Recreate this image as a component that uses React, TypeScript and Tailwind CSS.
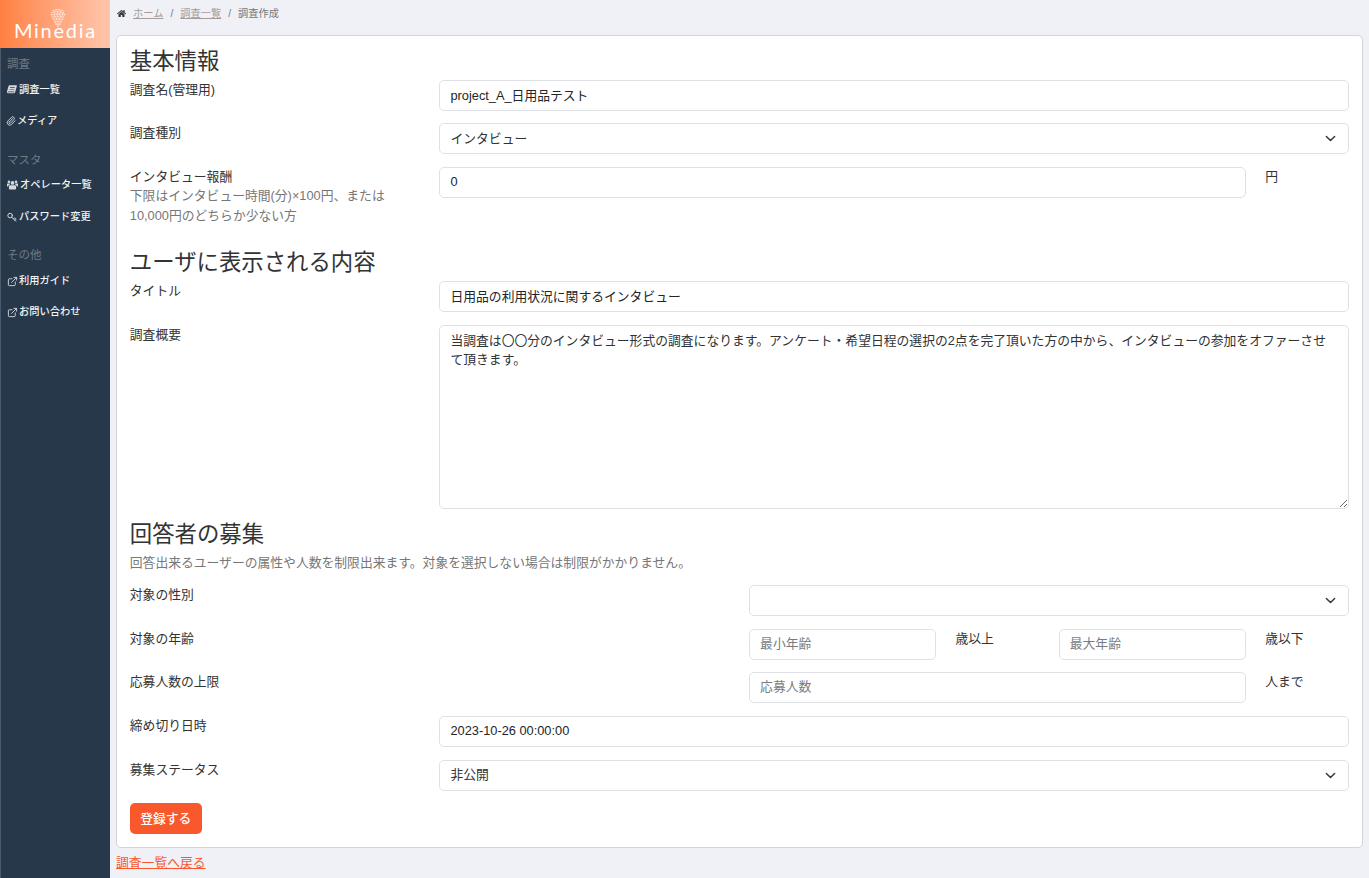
import React from "react";
import { FaHome } from "react-icons/fa";
import { ExternalLink, Paperclip, Key } from "lucide-react";

const BookIcon = () => (
  <svg viewBox="0 0 16 14" className="w-[10px] h-[9px]" fill="currentColor">
    <path d="M4 0h11c.8 0 1 .6.8 1.3L13 11.5c-.2.8-.8 1.5-2 1.5H2.500C1 13 0 12 0 10.500c0-.4 0-.7.200-1.200L2.500 1.500C2.700.6 3.200 0 4 0zM5 3l-.3 1h7.500l.3-1H5zM4.300 6l-.3 1h7.500l.3-1H4.300zM2.500 10c-.6 0-1 .3-1 .8s.4.700 1 .700h8.200c.3 0 .5-.2.600-.5l.2-1H2.500z" fillRule="evenodd" />
  </svg>
);

const UsersIcon = () => (
  <svg viewBox="0 0 16 14" className="w-[11px] h-[10px]" fill="currentColor">
    <circle cx="8" cy="4" r="2.700" />
    <circle cx="2.800" cy="2.400" r="1.900" />
    <circle cx="13.200" cy="2.400" r="1.900" />
    <path d="M4.500 7.500h7c1 0 1.700.8 1.700 2v2.500c0 1-.7 1.700-1.700 1.700h-7c-1 0-1.700-.7-1.700-1.700V9.500c0-1.200.7-2 1.700-2z" />
    <path d="M0 5.500C0 5 .4 4.800 1 4.800h3c-.2 1 .1 1.600.5 2-1.500 0-2.600 1-2.700 2.400H.8C.3 9.200 0 8.900 0 8.400zM16 5.500c0-.5-.4-.7-1-.7h-3c.2 1-.1 1.600-.5 2 1.500 0 2.600 1 2.700 2.400h1c.5 0 .8-.3.800-.8z" />
  </svg>
);

const Logo = () => (
  <svg viewBox="0 0 16 20" className="absolute left-[50px] top-[9px] w-[16px] h-[19px]" fill="#fff">
    <path d="M3 1.500 C6 -0.300 10 -0.300 13 1.500 L15.500 5 L13 11 L11 16 L8 19 L5 16 L3 11 L0.500 5 Z" opacity="0.22" />
    {[[3,1.500],[6,0.500],[9,0.500],[12,1.500],[1.500,3.500],[4.500,3],[7.500,3],[10.500,3],[13.500,3.500],[1,6],[4,5.500],[7,5.500],[10,5.500],[13,5.500],[15,6],[2,8.500],[5,8],[8,8],[11,8],[14,8.500],[3.500,11],[6.500,10.500],[9.500,10.500],[12.500,11],[5,13.500],[8,13],[11,13.500],[6,16],[8,16],[10,16],[8,18.500]].map(([x,y],i)=>(
      <circle key={i} cx={x} cy={y} r="0.700" opacity="0.85" />
    ))}
  </svg>
);

function NavItem({ icon, label, iconCls = "w-[10px]" }: { icon: React.ReactNode; label: string; iconCls?: string }) {
  return (
    <div className="flex items-center h-[31px] pl-[6px] gap-[2px] text-[#f2f3f5] text-[10.240px] font-medium">
      <span className={`${iconCls} shrink-0 flex justify-center text-[#d5d9de]`}>{icon}</span>
      <span>{label}</span>
    </div>
  );
}

function NavHead({ children, mt }: { children: React.ReactNode; mt: string }) {
  return <div className={`pl-[6px] text-[11.500px] leading-[17px] text-[#6f7b87] ${mt}`}>{children}</div>;
}

const inputCls = "block w-full h-[31px] rounded-[5px] border border-[#dee2e6] bg-white px-[10px] pb-[2px] text-[12.800px] text-[#212529] outline-none placeholder:text-[#777c81]";

function Select({ value, className = "" }: { value: string; className?: string }) {
  return (
    <div className={`relative h-[31px] rounded-[5px] border border-[#dee2e6] bg-white px-[10px] pb-[1px] flex items-center text-[12.800px] text-[#2f3336] ${className}`}>
      <span>{value}</span>
      <svg viewBox="0 0 16 16" fill="none" stroke="#343a40" strokeWidth="2.200" strokeLinecap="round" strokeLinejoin="round" className="absolute right-[12px] top-[9px] w-[11px] h-[11px]">
        <path d="M2 5l6 6 6-6" />
      </svg>
    </div>
  );
}

const Row = ({ children, className = "mb-[12.800px]" }: { children: React.ReactNode; className?: string }) => (
  <div className={`grid grid-cols-12 gap-x-[19.200px] ${className}`}>{children}</div>
);

const Head = ({ children, className }: { children: React.ReactNode; className: string }) => (
  <h2 className={`text-[22.400px] leading-[27px] text-[#333] ${className}`}>{children}</h2>
);

export default function App() {
  return (
    <div className="flex h-[878px] overflow-hidden bg-[#f0f1f7] text-[12.800px] leading-[19.200px] text-[#333] [font-family:'Liberation_Sans','Noto_Sans_CJK_JP',sans-serif]">
      <aside className="w-[110px] shrink-0 bg-[#26384a] border-l border-[#4a5a6a]">
        <div className="relative h-[48px] -ml-px bg-gradient-to-r from-[#ff8040] to-[#ffc6ac]">
          <Logo />
          <span className="absolute left-[14px] top-[17px] text-[20px] leading-[26px] tracking-[1.700px] text-white [font-family:'Lato',sans-serif]">Minedia</span>
        </div>
        <NavHead mt="mt-[8px]">調査</NavHead>
        <div className="mt-[1px]">
          <NavItem icon={<BookIcon />} label="調査一覧" />
          <NavItem iconCls="w-[8px]" icon={<Paperclip className="w-[10px] h-[10px] shrink-0" strokeWidth={2.2} />} label="メディア" />
        </div>
        <NavHead mt="mt-[15.500px]">マスタ</NavHead>
        <div className="mt-[1px] flex flex-col gap-[1px]">
          <NavItem iconCls="w-[11px]" icon={<UsersIcon />} label="オペレータ一覧" />
          <NavItem icon={<Key className="w-[10px] h-[10px] -scale-y-100" strokeWidth={2.4} />} label="パスワード変更" />
        </div>
        <NavHead mt="mt-[14px]">その他</NavHead>
        <div className="mt-[2px]">
          <NavItem icon={<ExternalLink className="w-[11px] h-[11px] shrink-0" strokeWidth={2} />} label="利用ガイド" />
          <NavItem icon={<ExternalLink className="w-[11px] h-[11px] shrink-0" strokeWidth={2} />} label="お問い合わせ" />
        </div>
      </aside>

      <main className="flex-1 min-w-0 px-[6px]">
        <nav className="h-[35px] pt-[4px] flex items-start gap-[7px] text-[10.240px] leading-[19px] text-[#777] pl-[1px]">
          <FaHome className="w-[9px] h-[9px] mt-[5px] text-[#343a40]" />
          <a className="underline text-[#a59c96]">ホーム</a>
          <span>/</span>
          <a className="underline text-[#a59c96]">調査一覧</a>
          <span>/</span>
          <span>調査作成</span>
        </nav>

        <section className="h-[813px] rounded-[5px] border border-[#d3d4da] bg-white px-[12.800px] pt-[12px]">
          <Head className="mb-[4.500px]">基本情報</Head>
          <Row>
            <label className="col-span-3">調査名(管理用)</label>
            <input className={`${inputCls} col-span-9`} defaultValue="project_A_日用品テスト" />
          </Row>
          <Row>
            <label className="col-span-3">調査種別</label>
            <Select className="col-span-9" value="インタビュー" />
          </Row>
          <Row>
            <label className="col-span-3">
              インタビュー報酬
              <span className="block text-[#777]">下限はインタビュー時間(分)×100円、または10,000円のどちらか少ない方</span>
            </label>
            <input className={`${inputCls} col-span-8`} defaultValue="0" />
            <span>円</span>
          </Row>

          <Head className="mt-[24.500px] mb-[5px]">ユーザに表示される内容</Head>
          <Row>
            <label className="col-span-3">タイトル</label>
            <input className={`${inputCls} col-span-9`} defaultValue="日用品の利用状況に関するインタビュー" />
          </Row>
          <Row className="mb-[12px]">
            <label className="col-span-3">調査概要</label>
            <textarea
              className="col-span-9 h-[184px] rounded-[5px] border border-[#dee2e6] bg-white px-[10px] py-[5px] text-[12.800px] leading-[19.200px] text-[#2f3336] outline-none"
              defaultValue="当調査は〇〇分のインタビュー形式の調査になります。アンケート・希望日程の選択の2点を完了頂いた方の中から、インタビューの参加をオファーさせて頂きます。"
            />
          </Row>

          <Head className="mb-[5px]">回答者の募集</Head>
          <p className="mb-[12.600px] text-[#777]">回答出来るユーザーの属性や人数を制限出来ます。対象を選択しない場合は制限がかかりません。</p>
          <Row>
            <label className="col-span-6">対象の性別</label>
            <Select className="col-span-6" value="" />
          </Row>
          <Row>
            <label className="col-span-6">対象の年齢</label>
            <input className={`${inputCls} col-span-2`} placeholder="最小年齢" />
            <span>歳以上</span>
            <input className={`${inputCls} col-span-2`} placeholder="最大年齢" />
            <span>歳以下</span>
          </Row>
          <Row>
            <label className="col-span-6">応募人数の上限</label>
            <input className={`${inputCls} col-span-5`} placeholder="応募人数" />
            <span>人まで</span>
          </Row>
          <Row>
            <label className="col-span-3">締め切り日時</label>
            <input className={`${inputCls} col-span-9`} defaultValue="2023-10-26 00:00:00" />
          </Row>
          <Row className="mb-[12px]">
            <label className="col-span-3">募集ステータス</label>
            <Select className="col-span-9" value="非公開" />
          </Row>
          <button className="h-[31px] w-[72px] rounded-[5px] bg-[#f9582c] text-white font-medium">登録する</button>
        </section>
        <a className="block mt-[5px] underline text-[#f9582c]">調査一覧へ戻る</a>
      </main>
    </div>
  );
}
